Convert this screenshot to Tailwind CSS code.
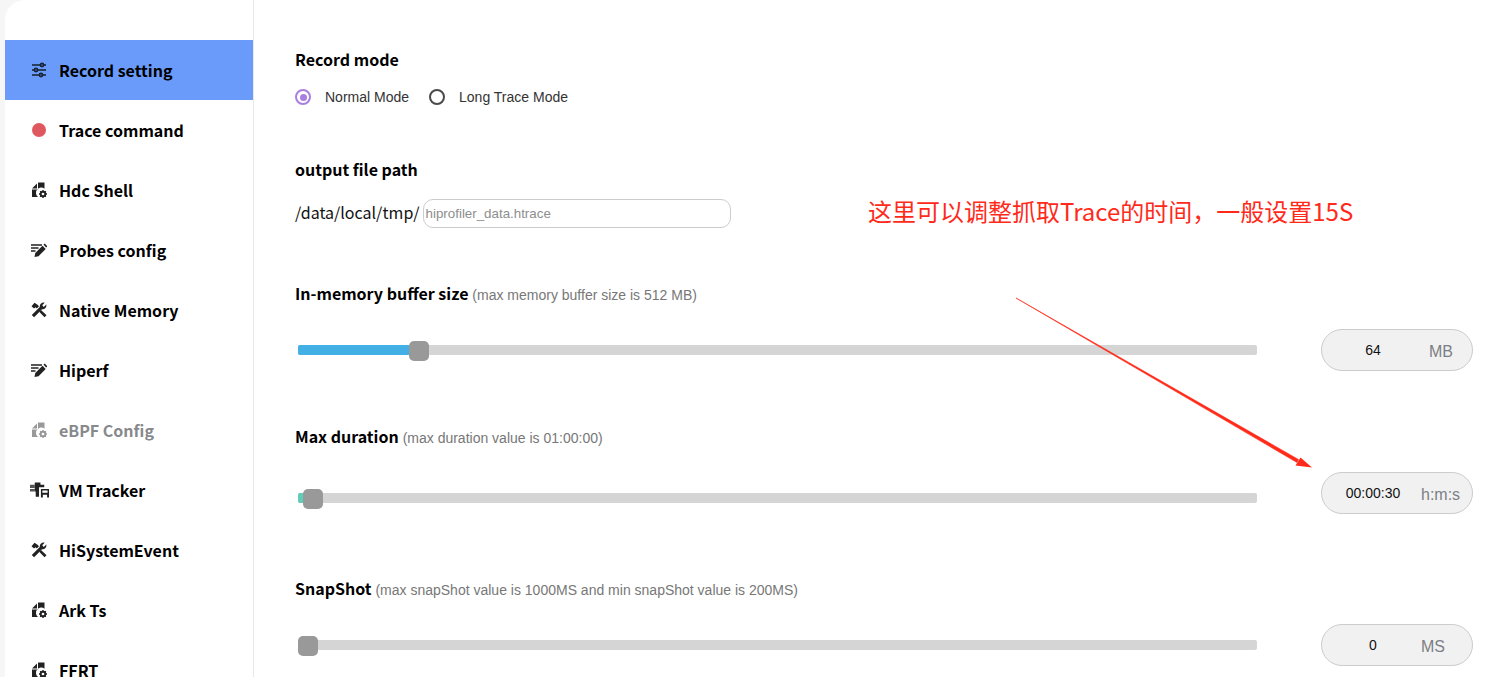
<!DOCTYPE html>
<html lang="en">
<head>
    <meta charset="UTF-8">
    <title>Record setting</title>
    <script src="https://cdn.jsdelivr.net/npm/@tailwindcss/browser@4"></script>
</head>
<body class="bg-white font-['Liberation_Sans',sans-serif] overflow-hidden">
<svg width="0" height="0" class="absolute">
    <defs>
        <symbol id="i-sliders" viewBox="0 0 16 16">
            <path d="M1 3h14M1 8h14M1 13h14" stroke="#16202c" stroke-width="1.600" fill="none"/>
            <circle cx="11" cy="3" r="1.800" fill="#2b4a7a" stroke="#16202c" stroke-width="1.200"/>
            <circle cx="5" cy="8" r="1.800" fill="#2b4a7a" stroke="#16202c" stroke-width="1.200"/>
            <circle cx="10" cy="13" r="1.800" fill="#2b4a7a" stroke="#16202c" stroke-width="1.200"/>
        </symbol>
        <symbol id="i-file" viewBox="0 0 16 16">
            <path d="M1 6.500 6 1.500V6.500z" fill="currentColor"/>
            <path d="M7 0.500h6.500v6.200A5 5 0 0 0 7 15H1V7.500h6z" fill="currentColor"/>
            <circle cx="12" cy="12" r="2.300" fill="none" stroke="currentColor" stroke-width="1.900"/>
            <path d="M12 8v1.500M12 14.500V16M8 12h1.500M14.500 12H16M9.200 9.200l1 1M13.800 13.800l1 1M14.800 9.200l-1 1M10.200 13.800l-1 1" stroke="currentColor" stroke-width="1.400"/>
        </symbol>
        <symbol id="i-pen" viewBox="0 0 16 16">
            <path d="M0 3h11M0 6h7.500M0 9h4.500" stroke="currentColor" stroke-width="1.500" fill="none"/>
            <path d="M3.500 15 4.300 11 11.500 3.800 14.700 7 7.500 14.200z" fill="currentColor"/>
            <path d="M12.500 2.800 13.700 1.600 16.400 4.300 15.200 5.500z" fill="currentColor"/>
        </symbol>
        <symbol id="i-tools" viewBox="0 0 16 16">
            <path d="M0.800 13 8.800 5a3.800 3.800 0 0 1 4.900-4.200L11.200 3.300 12.800 4.900 15.200 2.500A3.800 3.800 0 0 1 11 7.300L3.100 15.200z" fill="currentColor"/>
            <path d="M0.500 4.200 3.500 0.800 6.500 2.800 8 4.300 5.800 6.500 4.500 5.200 3 6.500zM8.200 9.800 10 8 15.500 13.300 13.500 15.300z" fill="currentColor"/>
        </symbol>
        <symbol id="i-vm" viewBox="0 0 20 16">
            <path d="M0 2.500h5V6H0zM0 7h5v2.500H0z" fill="#555"/>
            <path d="M5 0h6v2.500h4V5H9.500v10H6V9.500H5z" fill="currentColor"/>
            <path d="M11.500 7H20v9h-8.500z M13 8.500V11h5.500V8.500zM13.500 13v3h4.500v-3z" fill="currentColor" fill-rule="evenodd"/>
        </symbol>
    </defs>
</svg>

<div class="flex h-[677px] overflow-hidden">
    <!-- Sidebar -->
    <div class="w-[254px] shrink-0 bg-[#f6f6f6] pl-[5px]">
        <nav class="h-full bg-white rounded-tl-[20px] border-r border-[#e8e8e8] pt-10 font-['Noto_Sans_CJK_SC',sans-serif] text-[16px] font-bold text-[#000]">
            <a class="h-[60px] flex items-center bg-[#6b9bfa] pl-[26px] gap-[12px]"><svg class="w-4 h-4"><use href="#i-sliders"/></svg>Record setting</a>
            <a class="h-[60px] flex items-center pl-[26px] gap-[12px]"><span class="w-4 h-4 flex items-center justify-center"><span class="w-[14px] h-[14px] rounded-full bg-[#e0585f]"></span></span>Trace command</a>
            <a class="h-[60px] flex items-center pl-[26px] gap-[12px]"><svg class="w-4 h-4 text-[#222]"><use href="#i-file"/></svg>Hdc Shell</a>
            <a class="h-[60px] flex items-center pl-[26px] gap-[12px]"><svg class="w-4 h-4 text-[#222]"><use href="#i-pen"/></svg>Probes config</a>
            <a class="h-[60px] flex items-center pl-[26px] gap-[12px]"><svg class="w-4 h-4 text-[#222]"><use href="#i-tools"/></svg>Native Memory</a>
            <a class="h-[60px] flex items-center pl-[26px] gap-[12px]"><svg class="w-4 h-4 text-[#222]"><use href="#i-pen"/></svg>Hiperf</a>
            <a class="h-[60px] flex items-center pl-[26px] gap-[12px] text-[#87898c]"><svg class="w-4 h-4 text-[#999]"><use href="#i-file"/></svg>eBPF Config</a>
            <a class="h-[60px] flex items-center pl-[25px] gap-[10px]"><svg class="w-[19px] h-4 text-[#222]"><use href="#i-vm"/></svg>VM Tracker</a>
            <a class="h-[60px] flex items-center pl-[26px] gap-[12px]"><svg class="w-4 h-4 text-[#222]"><use href="#i-tools"/></svg>HiSystemEvent</a>
            <a class="h-[60px] flex items-center pl-[26px] gap-[12px]"><svg class="w-4 h-4 text-[#222]"><use href="#i-file"/></svg>Ark Ts</a>
            <a class="h-[60px] flex items-center pl-[26px] gap-[12px]"><svg class="w-4 h-4 text-[#222]"><use href="#i-file"/></svg>FFRT</a>
        </nav>
    </div>

    <!-- Main -->
    <main class="relative flex-1 pl-[41px] pt-[47px] pr-[21px]">
        <h2 class="h-6 leading-6 text-[16px] font-semibold text-black font-['Noto_Sans_CJK_SC',sans-serif]">Record mode</h2>
        <div class="mt-[14px] h-6 flex items-center text-[14px] text-[#333]">
            <span class="w-4 h-4 rounded-full border-2 border-[#a97fdf] flex items-center justify-center"><span class="w-[7px] h-[7px] rounded-full bg-[#a97fdf]"></span></span>
            <span class="ml-[14px]">Normal Mode</span>
            <span class="ml-[20px] w-4 h-4 rounded-full border-2 border-[#4a4a4a]"></span>
            <span class="ml-[14px]">Long Trace Mode</span>
        </div>

        <h2 class="mt-[48px] h-6 leading-6 text-[16px] font-semibold text-black font-['Noto_Sans_CJK_SC',sans-serif]">output file path</h2>
        <div class="mt-[18px] flex items-center">
            <span class="mb-1 text-[16px] text-[#111] font-['Noto_Sans_CJK_SC',sans-serif]">/data/local/tmp/</span>
            <div class="ml-[3px] w-[308px] h-[29px] flex items-center border border-[#ccc] rounded-[10px] pl-[2px] text-[13.33px] text-[#8e8e8e]">hiprofiler_data.htrace</div>
        </div>

        <div class="mt-[53px] h-6 leading-6 text-[14px]">
            <span class="text-[16px] font-semibold text-black font-['Noto_Sans_CJK_SC',sans-serif]">In-memory buffer size</span>
            <span class="text-[#777]">(max memory buffer size is 512 MB)</span>
        </div>
        <div class="mt-[24px] flex items-center justify-between">
            <div class="relative ml-[3px] w-[959px] h-[10px] rounded-[2px] bg-[#d5d5d5]">
                <div class="h-full w-[112px] rounded-[2px] bg-[#42b0e5]"></div>
                <div class="absolute left-[111px] top-[-4px] w-5 h-5 rounded-[5px] bg-[#999]"></div>
            </div>
            <div class="w-[152px] h-[42px] shrink-0 flex items-center rounded-[21px] border border-[#ccc] bg-[#f1f1f1]">
                <span class="w-[102px] text-center text-[14px] text-[#111]">64</span>
                <span class="ml-[5px] pt-[3px] whitespace-nowrap text-[16px] text-[#7b7f85]">MB</span>
            </div>
        </div>

        <div class="mt-[53px] h-6 leading-6 text-[14px]">
            <span class="text-[16px] font-semibold text-black font-['Noto_Sans_CJK_SC',sans-serif]">Max duration</span>
            <span class="text-[#777]">(max duration value is 01:00:00)</span>
        </div>
        <div class="mt-[24px] flex items-center justify-between">
            <div class="relative ml-[3px] mt-[10px] w-[959px] h-[10px] rounded-[2px] bg-[#d5d5d5]">
                <div class="h-full w-[8px] rounded-[2px] bg-[#5fcdb8]"></div>
                <div class="absolute left-[5px] top-[-4px] w-5 h-5 rounded-[5px] bg-[#999]"></div>
            </div>
            <div class="w-[152px] h-[42px] shrink-0 flex items-center rounded-[21px] border border-[#ccc] bg-[#f1f1f1]">
                <span class="w-[102px] text-center text-[14px] text-[#111]">00:00:30</span>
                <span class="ml-[-3px] pt-[3px] whitespace-nowrap text-[16px] text-[#7b7f85]">h:m:s</span>
            </div>
        </div>

        <div class="mt-[62px] h-6 leading-6 text-[14px]">
            <span class="text-[16px] font-semibold text-black font-['Noto_Sans_CJK_SC',sans-serif]">SnapShot</span>
            <span class="text-[#777]">(max snapShot value is 1000MS and min snapShot value is 200MS)</span>
        </div>
        <div class="mt-[24px] flex items-center justify-between">
            <div class="relative ml-[3px] w-[959px] h-[10px] rounded-[2px] bg-[#d5d5d5]">
                <div class="absolute left-0 top-[-4px] w-5 h-5 rounded-[5px] bg-[#999]"></div>
            </div>
            <div class="w-[152px] h-[42px] shrink-0 flex items-center rounded-[21px] border border-[#ccc] bg-[#f1f1f1]">
                <span class="w-[102px] text-center text-[14px] text-[#111]">0</span>
                <span class="ml-[-3px] pt-[3px] whitespace-nowrap text-[16px] text-[#7b7f85]">MS</span>
            </div>
        </div>

        <!-- annotation drawn on top of the screenshot -->
        <div class="absolute left-[614px] top-[194px] text-[24px] leading-[34px] whitespace-nowrap text-[#ff2a1a] font-['Noto_Sans_CJK_SC',sans-serif]">这里可以调整抓取Trace的时间，一般设置15S</div>
        <svg class="absolute left-[746px] top-[280px]" width="330" height="200" viewBox="0 0 330 200">
            <path d="M16 18 L298.500 179.500 L297 182.500z" fill="#ff2a1a" stroke="#ff2a1a" stroke-width="0.600" stroke-linejoin="round"/>
            <path d="M312 187.500 L300.500 177.500 L295.500 185.500z" fill="#ff2a1a"/>
        </svg>
    </main>
</div>
</body>
</html>
